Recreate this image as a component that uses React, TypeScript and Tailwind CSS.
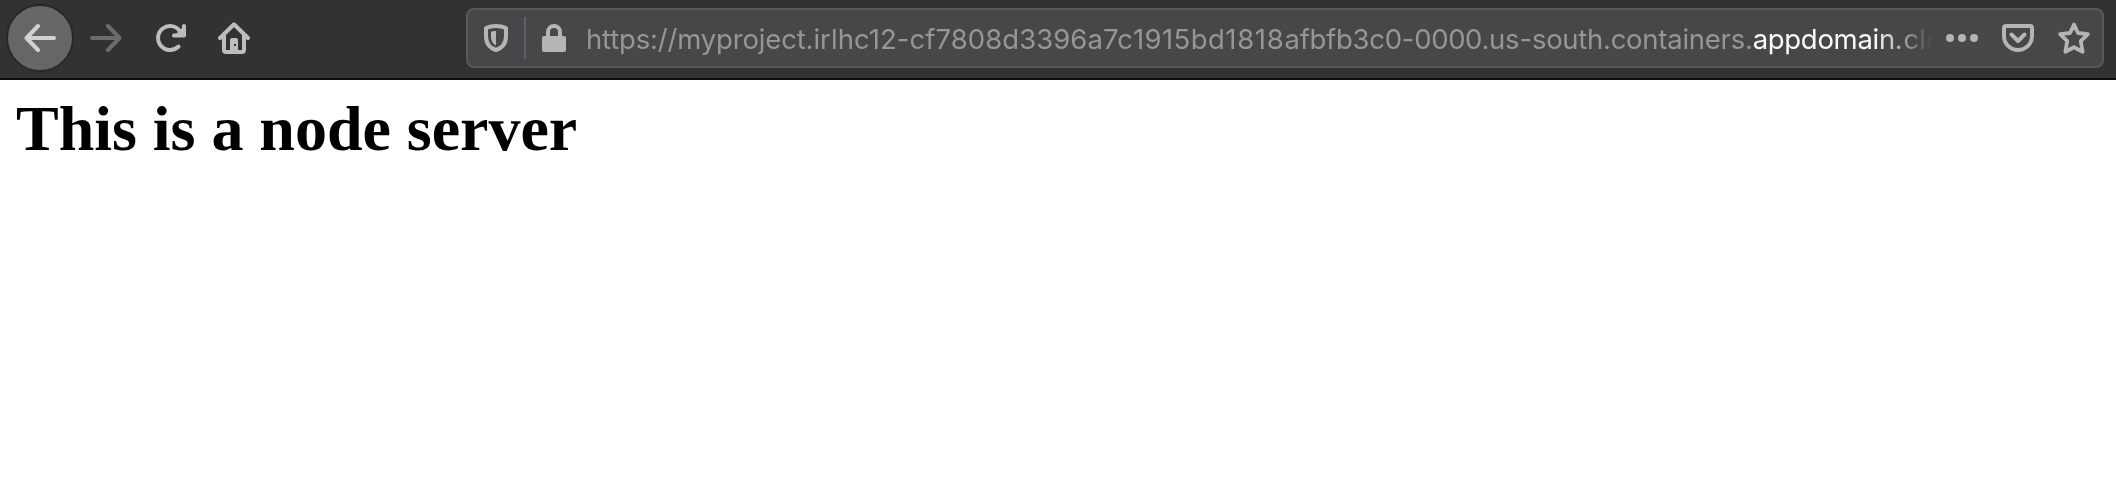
import React from 'react';

type IconProps = { children: React.ReactNode };

function Icon({ children }: IconProps) {
  return (
    <svg
      viewBox="0 0 32 32"
      fill="none"
      stroke="currentColor"
      strokeWidth={4}
      strokeLinecap="round"
      strokeLinejoin="round"
      className="size-8 shrink-0"
    >
      {children}
    </svg>
  );
}

function BackIcon() {
  return (
    <Icon>
      <path d="M30 16H3M14 4L2.5 16L14 28" />
    </Icon>
  );
}

function ForwardIcon() {
  return (
    <Icon>
      <path d="M2 16H29M18 4L29.5 16L18 28" />
    </Icon>
  );
}

function ReloadIcon() {
  return (
    <Icon>
      <path d="M24.5 24.5A12 12 0 1 1 26 9.3" />
      <path d="M30 4V14H20Z" fill="currentColor" stroke="none" />
      <path d="M30 4V13.5H20" />
    </Icon>
  );
}

function HomeIcon() {
  return (
    <Icon>
      <path d="M2 16L16 2.3L30 16" />
      <path d="M6 14V28Q6 30 8 30H24Q26 30 26 28V14" />
      <path
        d="M12 30V18Q12 16 14 16H18Q20 16 20 18V30ZM16 22V24H18V22Z"
        fill="currentColor"
        fillRule="evenodd"
        stroke="none"
      />
    </Icon>
  );
}

function ShieldIcon() {
  return (
    <Icon>
      <path d="M16 4C12.5 4 9 4.6 6 6V14C6 21.5 9.5 26 16 28C22.5 26 26 21.5 26 14V6C23 4.6 19.5 4 16 4Z" />
      <path d="M16 9V23.5C12.4 21.6 11 18.6 11 14V9.8C12.6 9.3 14 9 16 9Z" fill="currentColor" stroke="none" />
    </Icon>
  );
}

function LockIcon() {
  return (
    <Icon>
      <path d="M10 15V10A6 6 0 0 1 22 10V15" />
      <rect x="4" y="14" width="24" height="16" rx="2" fill="currentColor" stroke="none" />
    </Icon>
  );
}

function DotsIcon() {
  return (
    <Icon>
      <g fill="currentColor" stroke="none">
        <circle cx="4" cy="16" r="4" />
        <circle cx="16" cy="16" r="4" />
        <circle cx="28" cy="16" r="4" />
      </g>
    </Icon>
  );
}

function PocketIcon() {
  return (
    <Icon>
      <path d="M4 4H28Q30 4 30 6V14A14 14 0 0 1 2 14V6Q2 4 4 4Z" />
      <path d="M9.5 12.5L16 19L22.5 12.5" />
    </Icon>
  );
}

function StarIcon() {
  return (
    <Icon>
      <path
        strokeWidth={3.8}
        d="M16 2.6L20 11L29.8 12.1L22.8 19.2L24.6 29.8L16 25.2L7.4 29.8L9.2 19.2L2.2 12.1L12 11Z"
      />
    </Icon>
  );
}

function Url() {
  return (
    <div className="-ml-px w-[1347px] overflow-hidden pt-0.5 pl-px whitespace-pre font-['Inter',sans-serif] text-[27.5px] leading-10 text-[#969698] [mask-image:linear-gradient(to_right,black_calc(100%-56px),transparent)]">
      <span className="tracking-[-0.19px]">https://</span>
      <span className="tracking-[-0.15px]">myproject.</span>
      <span className="tracking-[0.05px]">irlhc12-cf7808d3396a7c</span>
      <span className="tracking-[0.42px]">1915bd</span>
      <span className="tracking-[0.7px]">1818</span>
      <span className="tracking-[-0.27px]">afbfb3c0-</span>
      <span className="tracking-[-0.38px]">0000.</span>
      <span className="tracking-[-0.13px]">us-</span>
      <span className="tracking-[-0.3px]">south.</span>
      <span className="tracking-[-0.25px]">containers.</span>
      <span className="text-[#f9f9fa]">
        <span className="tracking-[-0.3px]">appdomain</span>
        <span className="tracking-[0.8px]">.</span>
        <span>clo</span>
      </span>
    </div>
  );
}

function AddressBar() {
  return (
    <div className="flex h-15 w-[1638px] items-center rounded-lg border-2 border-[#59595b] bg-[#474749] pl-3 text-[#b5b5b7]">
      <ShieldIcon />
      <div className="ml-3 h-[42px] w-0.5 bg-[#5c626c]" />
      <div className="mr-4 ml-3 flex">
        <LockIcon />
      </div>
      <Url />
      <div className="ml-3.5 flex gap-6">
        <DotsIcon />
        <PocketIcon />
        <StarIcon />
      </div>
    </div>
  );
}

export default function App() {
  return (
    <div className="h-[494px] overflow-hidden bg-white">
      <header className="flex h-20 items-start justify-between border-b-2 border-[#0c0c0d] bg-[#323234] pr-3 text-[#bdbdbf]">
        <nav className="flex h-19 items-center pl-1.5">
          <button className="flex size-[68px] items-center justify-center rounded-full border-2 border-[#28282a] bg-[#666667] text-[#d2d2d3]">
            <BackIcon />
          </button>
          <button className="ml-4 text-[#6c6c6e]">
            <ForwardIcon />
          </button>
          <button className="ml-8">
            <ReloadIcon />
          </button>
          <button className="ml-8">
            <HomeIcon />
          </button>
        </nav>
        <div className="pt-2">
          <AddressBar />
        </div>
      </header>
      <main className="px-4 pt-3">
        <h1 className="font-['Liberation_Serif',serif] text-[64px] leading-[74px] font-bold tracking-[-0.03px] text-black">
          This is a node server
        </h1>
      </main>
    </div>
  );
}
